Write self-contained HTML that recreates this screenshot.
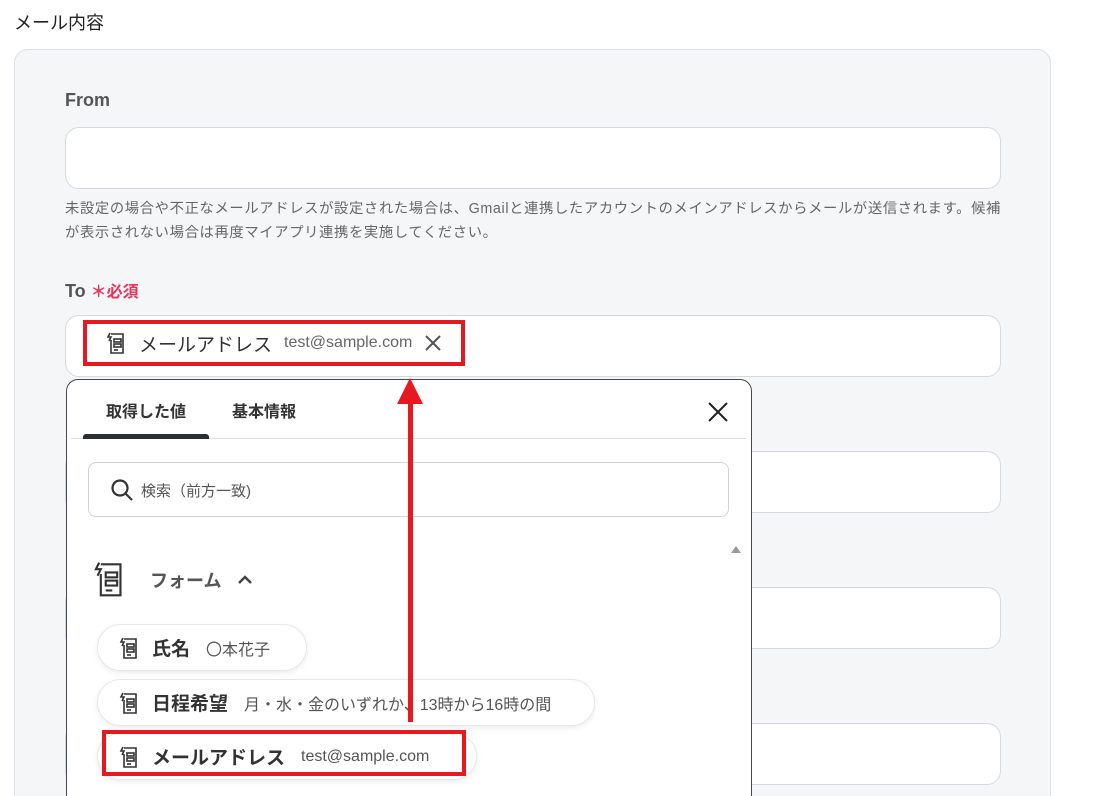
<!DOCTYPE html><html><head><meta charset="utf-8"><style>
*{box-sizing:border-box;margin:0;padding:0}
html,body{width:1106px;height:796px;overflow:hidden}
body{background:#fff;font-family:"Liberation Sans","Noto Sans CJK JP",sans-serif;color:#333;position:relative}
.a{position:absolute}
.inp{position:absolute;left:65px;width:936px;height:62px;background:#fff;border:1px solid #d6d9df;border-radius:14px}
.chip{position:absolute;left:97px;height:47px;background:#fff;border:1px solid #e6e8ec;border-radius:24px;box-shadow:0 2px 6px rgba(0,0,0,.08);display:flex;align-items:center;padding-left:20px;font-size:19px;font-weight:bold;color:#333;white-space:nowrap}
.chip .v{font-weight:normal;font-size:16px;color:#555;margin-left:16px}
.ic{width:22px;height:24px;margin-right:12px}
</style></head><body>
<div class="a" style="left:14px;top:9px;font-size:18px;color:#222">メール内容</div>
<div class="a" style="left:14px;top:49px;width:1037px;height:747px;background:#f5f6f8;border:1px solid #dcdfe5;border-bottom:none;border-radius:14px 14px 0 0"></div>
<div class="a" style="left:65px;top:90px;font-size:18px;font-weight:bold;color:#555">From</div>
<div class="inp" style="top:127px"></div>
<div class="a" style="left:65px;top:197px;font-size:14.3px;letter-spacing:0.65px;color:#666;line-height:24px;width:960px;white-space:nowrap">未設定の場合や不正なメールアドレスが設定された場合は、Gmailと連携したアカウントのメインアドレスからメールが送信されます。候補<br>が表示されない場合は再度マイアプリ連携を実施してください。</div>
<div class="a" style="left:65px;top:278px;font-size:18px;font-weight:bold;color:#555">To <span style="color:#e8335a;font-size:16px">＊必須</span></div>
<div class="inp" style="top:315px"></div>
<div class="inp" style="top:451px"></div>
<div class="inp" style="top:587px"></div>
<div class="inp" style="top:723px"></div>
<div class="a" style="left:83px;top:320px;width:382px;height:46px;border:4px solid #e5191f;display:flex;align-items:center;padding-left:18px;font-size:19px;color:#333;white-space:nowrap">
<svg class="ic" viewBox="0 0 22 24" fill="none" stroke="#333" stroke-width="1.6"><path d="M6 3h12v19H6V9"/><path d="M5 2L3 6h3l-2 4"/><rect x="9" y="8" width="7" height="3"/><rect x="9" y="13" width="7" height="3"/><path d="M9 19h4"/></svg>
メールアドレス<span style="font-size:16px;color:#666;margin-left:12px">test@sample.com</span>
<svg style="margin-left:12px" width="18" height="18" viewBox="0 0 18 18" stroke="#555" stroke-width="2"><path d="M2 2l14 14M16 2L2 16"/></svg></div>
<div class="a" style="left:66px;top:379px;width:686px;height:417px;background:#fff;border:1px solid #45484d;border-bottom:none;border-radius:12px 12px 0 0"></div>
<div class="a" style="left:106px;top:398px;font-size:16px;font-weight:bold;color:#333">取得した値</div>
<div class="a" style="left:232px;top:398px;font-size:16px;font-weight:bold;color:#333">基本情報</div>
<div class="a" style="left:71px;top:438px;width:675px;height:1px;background:#ddd"></div>
<div class="a" style="left:83px;top:434px;width:126px;height:5px;background:#2a2d33;border-radius:3px 3px 0 0"></div>
<svg class="a" style="left:707px;top:401px" width="22" height="22" viewBox="0 0 22 22" stroke="#222" stroke-width="2"><path d="M2 2l18 18M20 2L2 20"/></svg>
<div class="a" style="left:88px;top:462px;width:641px;height:55px;border:1px solid #cfd3d9;border-radius:8px"></div>
<svg class="a" style="left:110px;top:478px" width="24" height="24" viewBox="0 0 24 24" fill="none" stroke="#333" stroke-width="2.2"><circle cx="10" cy="10" r="7.5"/><path d="M15.5 15.5L22 22"/></svg>
<div class="a" style="left:141px;top:480px;font-size:15px;color:#555">検索（前方一致)</div>
<div class="a" style="left:731px;top:546px;width:0;height:0;border-left:5px solid transparent;border-right:5px solid transparent;border-bottom:7px solid #999"></div>
<svg class="a" style="left:91px;top:559px" width="36" height="40" viewBox="0 0 22 24" fill="none" stroke="#333" stroke-width="1.3"><path d="M6 3h12v19H6V9"/><path d="M5 2L3 6h3l-2 4"/><rect x="9" y="8" width="7" height="3"/><rect x="9" y="13" width="7" height="3"/><path d="M9 19h4"/></svg>
<div class="a" style="left:150px;top:567px;font-size:18px;font-weight:bold;color:#555">フォーム</div>
<svg class="a" style="left:237px;top:573px" width="16" height="12" viewBox="0 0 16 12" fill="none" stroke="#444" stroke-width="2.5"><path d="M2 10l6-6 6 6"/></svg>
<div class="chip" style="top:624px;width:210px">
<svg class="ic" viewBox="0 0 22 24" fill="none" stroke="#333" stroke-width="1.6"><path d="M6 3h12v19H6V9"/><path d="M5 2L3 6h3l-2 4"/><rect x="9" y="8" width="7" height="3"/><rect x="9" y="13" width="7" height="3"/><path d="M9 19h4"/></svg>氏名<span class="v">〇本花子</span></div>
<div class="chip" style="top:679px;width:498px">
<svg class="ic" viewBox="0 0 22 24" fill="none" stroke="#333" stroke-width="1.6"><path d="M6 3h12v19H6V9"/><path d="M5 2L3 6h3l-2 4"/><rect x="9" y="8" width="7" height="3"/><rect x="9" y="13" width="7" height="3"/><path d="M9 19h4"/></svg>日程希望<span class="v">月・水・金のいずれか、13時から16時の間</span></div>
<div class="chip" style="top:733px;width:380px">
<svg class="ic" viewBox="0 0 22 24" fill="none" stroke="#333" stroke-width="1.6"><path d="M6 3h12v19H6V9"/><path d="M5 2L3 6h3l-2 4"/><rect x="9" y="8" width="7" height="3"/><rect x="9" y="13" width="7" height="3"/><path d="M9 19h4"/></svg>メールアドレス<span class="v">test@sample.com</span></div>
<div class="a" style="left:102px;top:730px;width:364px;height:46px;border:4px solid #e5191f"></div>
<div class="a" style="left:408px;top:400px;width:5px;height:322px;background:#e5191f"></div>
<div class="a" style="left:397px;top:378px;width:0;height:0;border-left:13.5px solid transparent;border-right:13.5px solid transparent;border-bottom:26px solid #e5191f"></div>
</body></html>
